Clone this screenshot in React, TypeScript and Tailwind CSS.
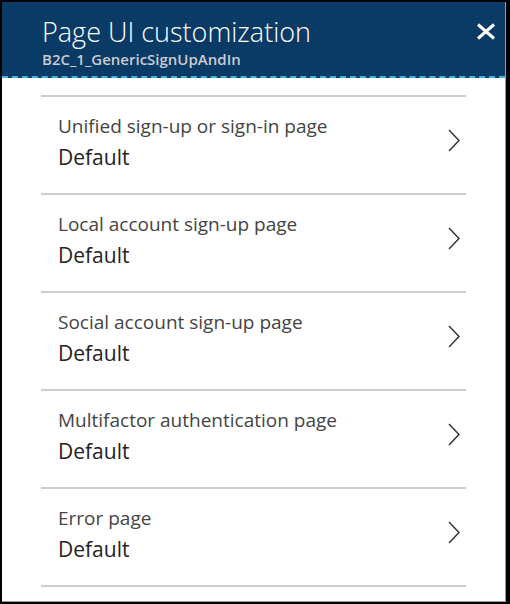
const items = [
  "Unified sign-up or sign-in page",
  "Local account sign-up page",
  "Social account sign-up page",
  "Multifactor authentication page",
  "Error page",
];

const Chevron = () => (
  <svg width="12" height="23" viewBox="0 0 12 23" fill="none" className="mt-[32px] text-[#333]">
    <path d="M1 1 L11 11.5 L1 22" stroke="currentColor" strokeWidth="1.5" />
  </svg>
);

const App = () => {
  return (
    <div
      className="h-[604px] w-[510px] bg-black pt-[2px] pb-[2px] pl-[2px] pr-[4px]"
      style={{ fontFamily: '"Open Sans", "Noto Sans", sans-serif' }}
    >
      <div className="flex h-full flex-col border-r border-b border-[#9a9a9a] bg-white">
        <div className="flex h-[76px] items-start justify-between border-b-2 border-dashed border-[#3ab4e6] bg-[#0a3a66] pl-[40px] pr-[9px]">
          <div className="flex flex-col">
            <span className="mt-[14px] text-[27px] leading-[32px] font-light text-white">
              Page UI customization
            </span>
            <span className="mt-[2px] text-[15px] leading-[18px] font-semibold text-[#c9ccd0]">
              B2C_1_GenericSignUpAndIn
            </span>
          </div>
          <svg width="20" height="17" viewBox="0 0 20 17" className="mt-[21px]">
            <path d="M2 1.5 L18 15.5 M18 1.5 L2 15.5" stroke="white" strokeWidth="3" />
          </svg>
        </div>
        <div className="mx-[39px] mt-[17px] border-t-2 border-[#cdcdcd]">
          {items.map((label) => (
            <div
              key={label}
              className="flex h-[98px] items-start justify-between border-b-2 border-[#cdcdcd] pl-[17px] pr-[6px]"
            >
              <div className="flex flex-col pt-[17px]">
                <span className="text-[19px] leading-[24px] text-[#444]">{label}</span>
                <span className="mt-[6px] text-[21px] leading-[26px] text-[#222]">Default</span>
              </div>
              <Chevron />
            </div>
          ))}
        </div>
      </div>
    </div>
  );
};

export default App;
